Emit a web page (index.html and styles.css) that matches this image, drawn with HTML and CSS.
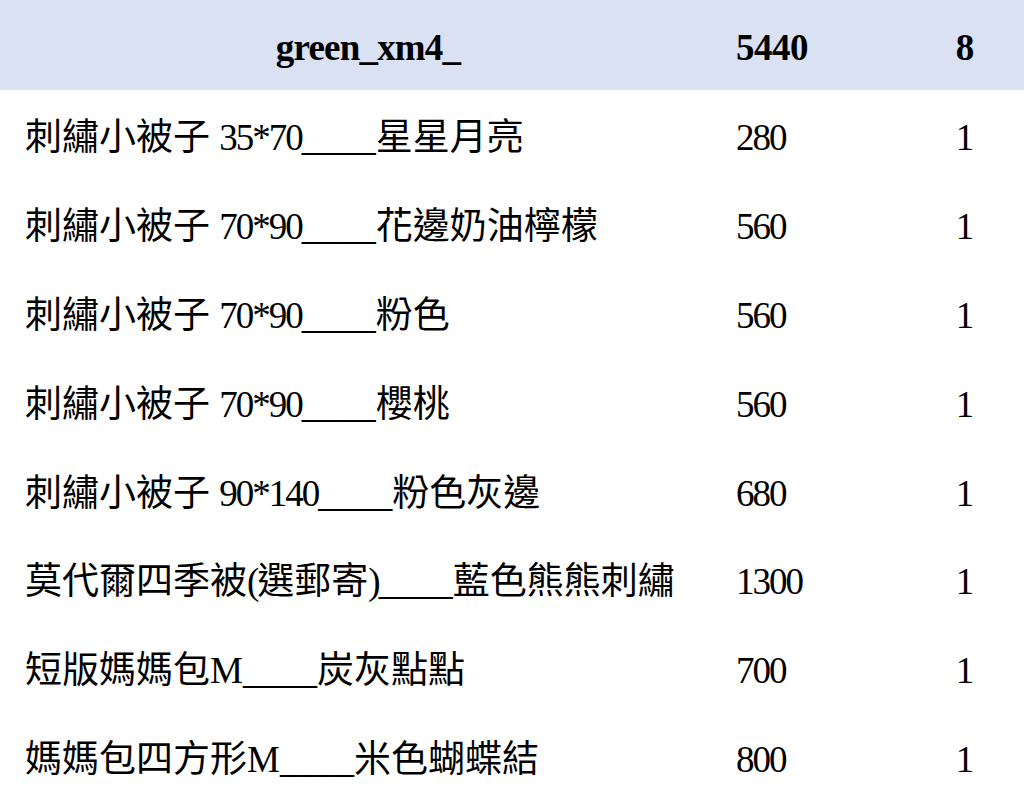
FILE: index.html
```html
<!DOCTYPE html>
<html lang="zh-Hant">
<head>
<meta charset="utf-8">
<title>訂單</title>
<link rel="stylesheet" href="styles.css">
</head>
<body>
<div class="sheet">
  <div class="row head"><div class="c name">green_xm4_</div><div class="c price">5440</div><div class="c qty">8</div></div>
  <div class="row"><div class="c name">刺繡小被子 <span class="num">35*70</span>____星星月亮</div><div class="c price">280</div><div class="c qty">1</div></div>
  <div class="row"><div class="c name">刺繡小被子 <span class="num">70*90</span>____花邊奶油檸檬</div><div class="c price">560</div><div class="c qty">1</div></div>
  <div class="row"><div class="c name">刺繡小被子 <span class="num">70*90</span>____粉色</div><div class="c price">560</div><div class="c qty">1</div></div>
  <div class="row"><div class="c name">刺繡小被子 <span class="num">70*90</span>____櫻桃</div><div class="c price">560</div><div class="c qty">1</div></div>
  <div class="row"><div class="c name">刺繡小被子 <span class="num">90*140</span>____粉色灰邊</div><div class="c price">680</div><div class="c qty">1</div></div>
  <div class="row"><div class="c name">莫代爾四季被<span class="num">(</span>選郵寄<span class="num">)</span>____藍色熊熊刺繡</div><div class="c price">1300</div><div class="c qty">1</div></div>
  <div class="row"><div class="c name">短版媽媽包M____炭灰點點</div><div class="c price">700</div><div class="c qty">1</div></div>
  <div class="row"><div class="c name">媽媽包四方形M____米色蝴蝶結</div><div class="c price">800</div><div class="c qty">1</div></div>
</div>
</body>
</html>
```
FILE: styles.css
```css
html, body {
  margin: 0;
  padding: 0;
  background: #ffffff;
}
body {
  font-family: "Liberation Serif", "Noto Sans CJK TC", serif;
  font-size: 37px;
  color: #000000;
  overflow: hidden;
}
.sheet {
  display: flex;
  flex-direction: column;
  width: 1024px;
}
.row {
  display: grid;
  grid-template-columns: 711px 195px 118px;
  align-items: center;
  height: 88.8px;
  padding-top: 5px;
  box-sizing: border-box;
  line-height: 36px;
  white-space: nowrap;
}
.head {
  height: 90px;
  background: #d9e1f2;
  font-weight: bold;
  margin-bottom: 1.6px;
}
.name {
  padding-left: 25px;
}
.num {
  letter-spacing: -2px;
}
.head .name {
  text-align: center;
  letter-spacing: -0.8px;
}
.price {
  padding-left: 25px;
  letter-spacing: -2px;
}
.head .price {
  letter-spacing: -0.5px;
}
.qty {
  text-align: center;
}
```
